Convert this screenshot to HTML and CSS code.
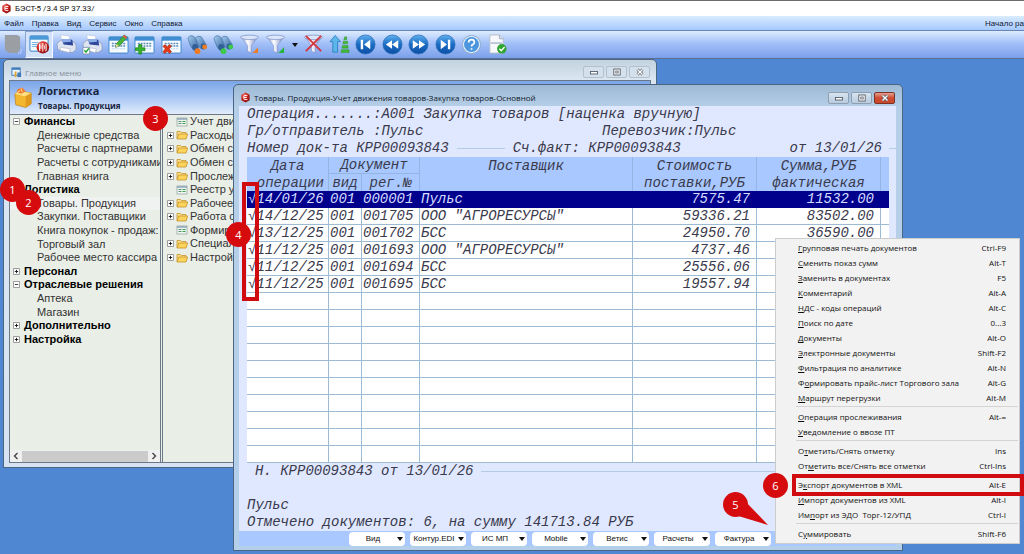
FILE: index.html
```html
<!DOCTYPE html>
<html lang="ru">
<head>
<meta charset="utf-8">
<title>БЭСТ-5</title>
<link rel="stylesheet" href="styles.css">
</head>
<body>
<svg class="defs" aria-hidden="true">
  <defs>
    <linearGradient id="gball" x1="0" y1="0" x2="0" y2="1"><stop offset="0" stop-color="#5fb0ee"/><stop offset=".5" stop-color="#1a6cc4"/><stop offset="1" stop-color="#0d4fa4"/></linearGradient>
    <linearGradient id="gfun" x1="0" y1="0" x2="1" y2="0"><stop offset="0" stop-color="#8f9fd0"/><stop offset=".4" stop-color="#fff"/><stop offset="1" stop-color="#6f80bd"/></linearGradient>
    <linearGradient id="gbin" x1="0" y1="0" x2="1" y2="1"><stop offset="0" stop-color="#a9cdf0"/><stop offset="1" stop-color="#2b5f9c"/></linearGradient>
    <radialGradient id="gred" cx=".35" cy=".3" r=".8"><stop offset="0" stop-color="#f07a70"/><stop offset=".5" stop-color="#c8201c"/><stop offset="1" stop-color="#7d0d0d"/></radialGradient>
  </defs>
  <symbol id="i-logo" viewBox="0 0 12 12"><path d="M6 .5 10.500 3v6L6 11.500 1.500 9V3Z" fill="url(#gred)"/><path d="M8 3.800H5.200a1 1 0 0 0-1 1v2.400a1 1 0 0 0 1 1H8M4.500 6h3" fill="none" stroke="#fff" stroke-width="1"/></symbol>
  <symbol id="i-db" viewBox="0 0 22 22"><path d="M3 1h13l3 2v13l-2 2v2H8l-5-3Z" fill="#9b9fa3"/><path d="M20 16v4h-4" fill="none" stroke="#e8eefc" stroke-dasharray="1 1"/></symbol>
  <symbol id="i-home" viewBox="0 0 22 22"><rect x="1" y="2" width="19" height="16" rx="1" fill="#f5faff" stroke="#2f7fc6"/><rect x="1" y="2" width="19" height="4" fill="#4a9ad8"/><path d="M3 9h7M3 11h6M3 13h6" stroke="#6fb0dd"/><circle cx="14.500" cy="14" r="6.500" fill="url(#gred)"/><path d="M12 10.500h-1v7h1M17 10.500h1v7h-1M14.500 9.500v9M12.500 12v4M16.500 12v4" stroke="#fff" stroke-width="1" fill="none"/></symbol>
  <symbol id="i-print" viewBox="0 0 22 22"><path d="M5 1 14 2l1 7-9-1Z" fill="#fff" stroke="#b9c2d6" stroke-width=".6"/><path d="M1 10 5 6.500l14 2 2 3v5l-4 3-15-3Z" fill="#dfe5f0" stroke="#8592b3" stroke-width=".7"/><path d="M6 5.500 17 6l1 6-10-1Z" fill="#2d479b"/><path d="m6 5.500 9-.5 1 3-9 1Z" fill="#8eb0e8"/><path d="m5 14 10 1.500-1 4L4 17Z" fill="#fff" stroke="#a5adc0" stroke-width=".6"/></symbol>
  <symbol id="i-grid" viewBox="0 0 22 22"><rect x="1" y="3" width="20" height="17" rx="1" fill="#f7fbff" stroke="#3a86c8"/><rect x="1" y="3" width="20" height="4" fill="#3f8ed2"/><path d="M4 10h14M4 12.500h14" stroke="#5f8cb5" stroke-width="1.600" stroke-dasharray="2 1"/><path d="M4 15.500h14" stroke="#b6d3ea" stroke-dasharray="2 1"/></symbol>
  <symbol id="i-edit" viewBox="0 0 22 22"><use href="#i-grid"/><path d="m8 14 1-4L17 1l3 2.500-8 9Z" fill="#49b53a" stroke="#2b7a26" stroke-width=".7"/><path d="m17 1 3 2.500-1.500 1.600L15.500 2.700Z" fill="#e85148"/><path d="m8 14 .8-3.500 2.800 2.200Z" fill="#f4d9a0"/></symbol>
  <symbol id="i-add" viewBox="0 0 22 22"><use href="#i-grid"/><path d="M5 11h3v3.500h3.500v3H8V21H5v-3.500H1.500v-3H5Z" fill="#36b52c" stroke="#1b7d19" stroke-width=".7"/></symbol>
  <symbol id="i-del" viewBox="0 0 22 22"><use href="#i-grid"/><path d="m2 13 2-2 2.500 2.500L9 11l2 2-2.500 2.500L11 18.500 9 20.500 6.500 18 4 20.500 2 18.500l2.500-3Z" fill="#e3391c" stroke="#a4210d" stroke-width=".6"/></symbol>
  <symbol id="i-bino" viewBox="0 0 22 22"><path d="M1 5q1-4 5-3 2 .5 3 3l3 6q1 5-3 6-3 0-5-4Z" fill="url(#gbin)" stroke="#4573a8" stroke-width=".7"/><path d="M9 4q2-3 6-1l5 8q1 4-3 5-3 0-5-4Z" fill="url(#gbin)" stroke="#4573a8" stroke-width=".7"/><ellipse cx="8.500" cy="14" rx="3" ry="3.500" fill="#315f96"/><ellipse cx="17" cy="13" rx="2.600" ry="3" fill="#315f96"/></symbol>
  <symbol id="i-fun" viewBox="0 0 22 22"><path d="M2 3 9 12v6l4 2v-8l7-9Z" fill="url(#gfun)" stroke="#7b8bc0" stroke-width=".6"/><ellipse cx="11" cy="3.500" rx="9.500" ry="2.300" fill="#dce6fa" stroke="#7b8bc0" stroke-width=".7"/></symbol>
  <symbol id="i-sort" viewBox="0 0 22 22"><path d="M6.500 1.500 12 8H9v11H4V8H1Z" fill="#5cb6ea" stroke="#1e78b8" stroke-width=".8"/><path d="M16.500 3h2v3h-3ZM15 7.500h4.500v2.800h-5ZM14 12h6v2.800h-6.500ZM13 16.500h8v3h-8.500Z" fill="#41bb33" stroke="#24861d" stroke-width=".4"/></symbol>
  <symbol id="i-ball" viewBox="0 0 22 22"><circle cx="11" cy="11" r="10" fill="url(#gball)" stroke="#2d6fb8" stroke-width=".8"/></symbol>
  <symbol id="i-first" viewBox="0 0 22 22"><use href="#i-ball"/><path d="M6 6h2.500v10H6ZM16 6v10l-6.500-5Z" fill="#fff"/></symbol>
  <symbol id="i-prev" viewBox="0 0 22 22"><use href="#i-ball"/><path d="M10.500 6.500v9L4 11ZM17 6.500v9L10.500 11Z" fill="#fff"/></symbol>
  <symbol id="i-next" viewBox="0 0 22 22"><use href="#i-ball"/><path d="M11.500 6.500v9L18 11ZM5 6.500v9l6.500-4.500Z" fill="#fff"/></symbol>
  <symbol id="i-last" viewBox="0 0 22 22"><use href="#i-ball"/><path d="M13.500 6H16v10h-2.500ZM6 6v10l6.500-5Z" fill="#fff"/></symbol>
  <symbol id="i-help" viewBox="0 0 22 22"><circle cx="11" cy="11" r="9.500" fill="#e3effb" stroke="#8aa9cc"/><circle cx="11" cy="11" r="7.800" fill="#4c96dd"/><path d="M8 9q0-3 3-3t3 2.600q0 1.600-1.700 2.500-1.300.7-1.300 2M11 14.800v1.800" fill="none" stroke="#fff" stroke-width="1.800"/></symbol>
  <symbol id="i-doc" viewBox="0 0 22 22"><path d="M3 1h10l4 4v15H3Z" fill="#f6f8fb" stroke="#b4bccb"/><path d="M13 1v4h4" fill="#d4dae6" stroke="#a8b1c2"/><path d="M4 9.500h12" stroke="#a9b6cc" stroke-width="1.500"/><circle cx="15.500" cy="15.500" r="5" fill="#2fa532"/><path d="m13 15.500 2 2 3.500-4" fill="none" stroke="#fff" stroke-width="1.500"/></symbol>
  <symbol id="i-folder" viewBox="0 0 12 10"><path d="M1 8.500V1.500h3.500l1 1H10V4" fill="#fbe08a" stroke="#c8922a" stroke-width=".8"/><path d="M1 9 2.700 4h9L10 9Z" fill="#fcd45c" stroke="#c8922a" stroke-width=".8"/></symbol>
  <symbol id="i-form" viewBox="0 0 12 10"><rect x="1" y="1" width="10" height="8" fill="#f2f6f2" stroke="#9aa7a0" stroke-width=".8"/><path d="M1 2h10" stroke="#84a0b8" stroke-width="1.400"/><path d="M2.500 4.500h3M2.500 6.500h3" stroke="#5b8f74"/><path d="M6.500 4.500h3M6.500 6.500h3" stroke="#3c9c50" stroke-width="1.200"/></symbol>
  <symbol id="i-plus" viewBox="0 0 7 7"><path d="M.5.5h6v6h-6Z" fill="#fff" stroke="#888" stroke-width=".8"/><path d="M1.800 3.500h3.400M3.500 1.800v3.400" stroke="#111" stroke-width=".9"/></symbol>
  <symbol id="i-minus" viewBox="0 0 7 7"><path d="M.5.5h6v6h-6Z" fill="#fff" stroke="#888" stroke-width=".8"/><path d="M1.800 3.500h3.400" stroke="#333" stroke-width=".9"/></symbol>
  <symbol id="i-min" viewBox="0 0 10 8"><rect x="1.500" y="3.500" width="7" height="2.500" fill="#fff" stroke="#555d68" stroke-width=".9"/></symbol>
  <symbol id="i-max" viewBox="0 0 10 8"><rect x="1.800" y="1" width="6.400" height="6" fill="#fff" stroke="#555d68" stroke-width=".9"/><rect x="3.800" y="3" width="2.400" height="2" fill="#fff" stroke="#555d68" stroke-width=".8"/></symbol>
  <symbol id="i-close" viewBox="0 0 10 8"><path d="m2.500 1.500 5 5m0-5-5 5" stroke="#555d68" stroke-width="2.800"/><path d="m2.500 1.500 5 5m0-5-5 5" stroke="#fff" stroke-width="1.400"/></symbol>
</svg>

<header>
  <div class="app-title"><svg class="logo"><use href="#i-logo"/></svg><span>БЭСТ-5 /3.4 SP 37.33/</span></div>
  <nav class="menubar">
    <button>Файл</button><button>Правка</button><button>Вид</button><button>Сервис</button><button>Окно</button><button>Справка</button>
    <span class="status">Начало ра</span>
  </nav>
  <div class="toolbar">
    <button class="tool lead" aria-label="База"><svg><use href="#i-db"/></svg></button>
    <div class="tools tools-edit">
      <button class="tool on" aria-label="Главное меню"><svg><use href="#i-home"/></svg></button>
      <button class="tool" aria-label="Печать"><svg><use href="#i-print"/></svg></button>
      <button class="tool" aria-label="Печать отмеченных"><svg viewBox="0 0 22 22"><use href="#i-print"/><path d="M1 14h7v7H1Z" fill="#fff" stroke="#6e87a8" stroke-width=".8"/><path d="m2.500 17 1.700 2 3-4" fill="none" stroke="#1da32a" stroke-width="1.500"/></svg></button>
      <button class="tool" aria-label="Изменить"><svg><use href="#i-edit"/></svg></button>
      <button class="tool" aria-label="Добавить"><svg><use href="#i-add"/></svg></button>
      <button class="tool" aria-label="Удалить"><svg><use href="#i-del"/></svg></button>
      <button class="tool" aria-label="Найти"><svg viewBox="0 0 22 22"><use href="#i-bino"/><circle cx="11" cy="18" r="3" fill="#ef7b24"/><circle cx="18.500" cy="13.500" r="2.600" fill="#ef7b24"/></svg></button>
      <button class="tool" aria-label="Найти далее"><svg viewBox="0 0 22 22"><use href="#i-bino"/><circle cx="11" cy="18" r="3" fill="#3dc94a"/><circle cx="18.500" cy="13.500" r="2.600" fill="#3dc94a"/></svg></button>
      <button class="tool" aria-label="Фильтр"><svg viewBox="0 0 22 22"><use href="#i-fun"/><path d="M20 14v6h-6Z" fill="#ee7d28"/></svg></button>
      <button class="tool" aria-label="Фильтр по значению"><svg viewBox="0 0 22 22"><use href="#i-fun"/><path d="M20 14v6h-6Z" fill="#27b43c"/></svg></button>
    </div>
    <button class="tool drop" aria-label="Список фильтров"><i class="caret"></i></button>
    <div class="tools tools-nav">
      <button class="tool" aria-label="Снять фильтр"><svg viewBox="0 0 22 22"><use href="#i-fun"/><path d="m3 2 16 16M19 2 3 18" stroke="#d3373f" stroke-width="2"/></svg></button>
      <button class="tool" aria-label="Сортировка"><svg><use href="#i-sort"/></svg></button>
      <button class="tool" aria-label="Первая"><svg><use href="#i-first"/></svg></button>
      <button class="tool" aria-label="Назад"><svg><use href="#i-prev"/></svg></button>
      <button class="tool" aria-label="Вперед"><svg><use href="#i-next"/></svg></button>
      <button class="tool" aria-label="Последняя"><svg><use href="#i-last"/></svg></button>
      <button class="tool" aria-label="Помощь"><svg><use href="#i-help"/></svg></button>
      <button class="tool" aria-label="Документ"><svg><use href="#i-doc"/></svg></button>
    </div>
  </div>
</header>

<main class="desktop">
  <section class="window main-menu">
    <div class="caption">
      <svg class="cap-icon" viewBox="0 0 12 12"><rect x="1" y="1" width="9" height="8" fill="#eaf4ff" stroke="#3a78b8"/><path d="M1 2h9" stroke="#3a78b8" stroke-width="2"/><path d="M4 5h2v6H4Z" fill="#e2a62f"/><path d="M7 6h4v5H7Z" fill="#4178b6"/></svg>
      <span>Главное меню</span>
      <div class="winbtns"><button aria-label="Свернуть"><svg><use href="#i-min"/></svg></button><button aria-label="Развернуть"><svg><use href="#i-max"/></svg></button><button aria-label="Закрыть"><svg><use href="#i-close"/></svg></button></div>
    </div>
    <div class="pane">
      <div class="section-head">
        <svg viewBox="0 0 22 24"><path d="M2 8 8 5l12 2v12l-6 4L3 20Z" fill="#f3b62f" stroke="#b97a12" stroke-width=".7"/><path d="m2 8 11 3 7-4v12l-6 4V11" fill="#e09a1b"/><path d="M2 8 8 5l12 2-7 4Z" fill="#ffdf80"/><path d="m5 3 5-2 4 4-5 3-5-2Z" fill="#ef7a33"/><path d="m4 7 4-3M9 2l1 4" stroke="#ffe08a"/></svg>
        <div><h1>Логистика</h1><h2>Товары. Продукция</h2></div>
      </div>
      <div class="trees">
        <div class="tree-box">
          <ul class="tree nav-tree">
            <li class="group"><svg><use href="#i-minus"/></svg>Финансы</li>
            <li>Денежные средства</li><li>Расчеты с партнерами</li><li>Расчеты с сотрудниками</li><li>Главная книга</li>
            <li class="group"><svg><use href="#i-minus"/></svg>Логистика</li>
            <li class="current">Товары. Продукция</li><li>Закупки. Поставщики</li><li>Книга покупок - продаж:</li><li>Торговый зал</li><li>Рабочее место кассира</li>
            <li class="group"><svg><use href="#i-plus"/></svg>Персонал</li>
            <li class="group"><svg><use href="#i-minus"/></svg>Отраслевые решения</li>
            <li>Аптека</li><li>Магазин</li>
            <li class="group"><svg><use href="#i-plus"/></svg>Дополнительно</li>
            <li class="group"><svg><use href="#i-plus"/></svg>Настройка</li>
          </ul>
          <div class="scroll"><svg viewBox="0 0 6 8"><path d="M4.500 1 1.500 4l3 3" fill="none" stroke="#444" stroke-width="1.400"/></svg><i></i><svg viewBox="0 0 6 8"><path d="m1.500 1 3 3-3 3" fill="none" stroke="#444" stroke-width="1.400"/></svg></div>
        </div>
        <ul class="tree task-tree">
          <li><i></i><svg><use href="#i-form"/></svg>Учет движ</li>
          <li><svg class="box"><use href="#i-plus"/></svg><svg><use href="#i-folder"/></svg>Расходы</li>
          <li><svg class="box"><use href="#i-plus"/></svg><svg><use href="#i-folder"/></svg>Обмен с ч</li>
          <li><svg class="box"><use href="#i-plus"/></svg><svg><use href="#i-folder"/></svg>Обмен с</li>
          <li><svg class="box"><use href="#i-plus"/></svg><svg><use href="#i-folder"/></svg>Прослежи</li>
          <li><i></i><svg><use href="#i-form"/></svg>Реестр уп</li>
          <li><svg class="box"><use href="#i-plus"/></svg><svg><use href="#i-folder"/></svg>Рабочее</li>
          <li><svg class="box"><use href="#i-plus"/></svg><svg><use href="#i-folder"/></svg>Работа с</li>
          <li><i></i><svg><use href="#i-form"/></svg>Формиро</li>
          <li><svg class="box"><use href="#i-plus"/></svg><svg><use href="#i-folder"/></svg>Специаль</li>
          <li><svg class="box"><use href="#i-plus"/></svg><svg><use href="#i-folder"/></svg>Настройк</li>
        </ul>
      </div>
    </div>
  </section>

  <section class="window journal">
    <div class="caption">
      <svg class="cap-icon"><use href="#i-logo"/></svg>
      <span>Товары. Продукция-Учет движения товаров-Закупка товаров-Основной</span>
      <div class="winbtns"><button aria-label="Свернуть"><svg><use href="#i-min"/></svg></button><button aria-label="Развернуть"><svg><use href="#i-max"/></svg></button><button class="close" aria-label="Закрыть"><svg><use href="#i-close"/></svg></button></div>
    </div>
    <div class="sheet">
      <div class="line"><span>Операция.......:А001 Закупка товаров [наценка вручную]</span></div>
      <div class="line"><span class="sender">Гр/отправитель :Пульс</span><span>Перевозчик:Пульс</span></div>
      <div class="line"><span>Номер док-та КРР00093843</span><i class="dash"></i><span>Сч.факт: КРР00093843</span><span class="date">от 13/01/26</span><i class="dash tail"></i></div>
      <table>
        <colgroup><col class="c-date"><col class="c-kind"><col class="c-reg"><col><col class="c-sum"><col class="c-sum"><col class="c-end"></colgroup>
        <thead>
          <tr><th>Дата</th><th colspan="2" class="under">Документ</th><th>Поставщик</th><th>Стоимость</th><th>Сумма,РУБ</th><th></th></tr>
          <tr><th class="op">операции</th><th>вид</th><th>рег.№</th><th></th><th>поставки,РУБ</th><th>фактическая</th><th></th></tr>
        </thead>
        <tbody>
          <tr class="sel"><td>√14/01/26</td><td>001</td><td>000001</td><td>Пульс</td><td class="n">7575.47</td><td class="n">11532.00</td><td></td></tr>
          <tr><td>√14/12/25</td><td>001</td><td>001705</td><td>ООО "АГРОРЕСУРСЫ"</td><td class="n">59336.21</td><td class="n">83502.00</td><td></td></tr>
          <tr><td>√13/12/25</td><td>001</td><td>001702</td><td>БСС</td><td class="n">24950.70</td><td class="n">36590.00</td><td></td></tr>
          <tr><td>√11/12/25</td><td>001</td><td>001693</td><td>ООО "АГРОРЕСУРСЫ"</td><td class="n">4737.46</td><td></td><td></td></tr>
          <tr><td>√11/12/25</td><td>001</td><td>001694</td><td>БСС</td><td class="n">25556.06</td><td></td><td></td></tr>
          <tr><td>√11/12/25</td><td>001</td><td>001695</td><td>БСС</td><td class="n">19557.94</td><td></td><td></td></tr>
          <tr><td></td><td></td><td></td><td></td><td></td><td></td><td></td></tr>
          <tr><td></td><td></td><td></td><td></td><td></td><td></td><td></td></tr>
          <tr><td></td><td></td><td></td><td></td><td></td><td></td><td></td></tr>
          <tr><td></td><td></td><td></td><td></td><td></td><td></td><td></td></tr>
          <tr><td></td><td></td><td></td><td></td><td></td><td></td><td></td></tr>
          <tr><td></td><td></td><td></td><td></td><td></td><td></td><td></td></tr>
          <tr><td></td><td></td><td></td><td></td><td></td><td></td><td></td></tr>
          <tr><td></td><td></td><td></td><td></td><td></td><td></td><td></td></tr>
          <tr><td></td><td></td><td></td><td></td><td></td><td></td><td></td></tr>
          <tr><td></td><td></td><td></td><td></td><td></td><td></td><td></td></tr>
        </tbody>
      </table>
      <div class="line note"><span>Н. КРР00093843 от 13/01/26</span><i class="dash rest"></i></div>
      <div class="line"></div>
      <div class="line"><span>Пульс</span></div>
      <div class="line"><span>Отмечено документов: 6, на сумму 141713.84 РУБ</span></div>
      <div class="actions">
        <button><span>Вид</span><i class="caret"></i></button><button><span>Контур.EDI</span><i class="caret"></i></button><button><span>ИС МП</span><i class="caret"></i></button><button><span>Mobile</span><i class="caret"></i></button><button><span>Ветис</span><i class="caret"></i></button><button><span>Расчеты</span><i class="caret"></i></button><button><span>Фактура</span><i class="caret"></i></button>
      </div>
    </div>
  </section>

  <div class="popup" role="menu">
    <button role="menuitem"><span><u>Г</u>рупповая печать документов</span><kbd>Ctrl-F9</kbd></button>
    <button role="menuitem"><span><u>С</u>менить показ сумм</span><kbd>Alt-T</kbd></button>
    <button role="menuitem"><span><u>З</u>аменить в документах</span><kbd>F5</kbd></button>
    <button role="menuitem"><span><u>К</u>омментарий</span><kbd>Alt-A</kbd></button>
    <button role="menuitem"><span><u>Н</u>ДС - коды операций</span><kbd>Alt-C</kbd></button>
    <button role="menuitem"><span><u>П</u>оиск по дате</span><kbd>0...3</kbd></button>
    <button role="menuitem"><span><u>Д</u>окументы</span><kbd>Alt-O</kbd></button>
    <button role="menuitem"><span><u>Э</u>лектронные документы</span><kbd>Shift-F2</kbd></button>
    <button role="menuitem"><span><u>Ф</u>ильтрация по аналитике</span><kbd>Alt-N</kbd></button>
    <button role="menuitem"><span>Ф<u>о</u>рмировать прайс-лист Торгового зала</span><kbd>Alt-G</kbd></button>
    <button role="menuitem"><span><u>М</u>аршрут перегрузки</span><kbd>Alt-M</kbd></button>
    <hr>
    <button role="menuitem"><span><u>О</u>перация прослеживания</span><kbd>Alt-=</kbd></button>
    <button role="menuitem"><span><u>У</u>ведомление о ввозе ПТ</span></button>
    <hr>
    <button role="menuitem"><span>О<u>т</u>метить/Снять отметку</span><kbd>Ins</kbd></button>
    <button role="menuitem"><span>От<u>м</u>етить все/Снять все отметки</span><kbd>Ctrl-Ins</kbd></button>
    <hr>
    <button role="menuitem"><span>Э<u>к</u>спорт документов в XML</span><kbd>Alt-E</kbd></button>
    <button role="menuitem"><span><u>И</u>мпорт документов из XML</span><kbd>Alt-I</kbd></button>
    <button role="menuitem"><span>Им<u>п</u>орт из ЭДО&nbsp; Торг-12/УПД</span><kbd>Ctrl-I</kbd></button>
    <hr>
    <button role="menuitem"><span>С<u>у</u>ммировать</span><kbd>Shift-F6</kbd></button>
  </div>
</main>

<div class="frame frame-marks"></div>
<div class="frame frame-export"></div>
<svg class="pointer" viewBox="0 0 40 30"><path d="M14 0 37 24 4 14Z" fill="#d60b0e"/></svg>
<b class="pin p1">1</b><b class="pin p2">2</b><b class="pin p3">3</b><b class="pin p4">4</b><b class="pin p5">5</b><b class="pin p6">6</b>
</body>
</html>
```
FILE: styles.css
```css
* { box-sizing: border-box; }
body {
  margin: 0;
  height: 100vh;
  overflow: hidden;
  display: flex;
  flex-direction: column;
  position: relative;
  background: #5087d3;
  font-family: "Open Sans", "Noto Sans", sans-serif;
  font-size: 8px;
  color: #111;
}
button { font: inherit; color: inherit; border: 0; padding: 0; margin: 0; background: none; }
ul, h1, h2 { margin: 0; padding: 0; list-style: none; }
svg { display: block; flex: none; }
.defs { position: absolute; width: 0; height: 0; }

/* application chrome */
.app-title {
  height: 16px;
  display: flex;
  align-items: center;
  gap: 3px;
  padding-left: 1px;
  background: #fff;
  border-top: 1px solid #6a6a6a;
  font: 8px Roboto, sans-serif;
}
.logo { width: 11px; height: 11px; }
.menubar {
  height: 15px;
  display: flex;
  align-items: center;
  gap: 8px;
  padding-left: 4px;
  background: linear-gradient(#d9ecff, #a6c9ff);
  border-bottom: 1px solid #6686ba;
  font-family: "Liberation Sans", sans-serif;
  color: #101830;
}
.status { margin-left: auto; }
.toolbar {
  height: 28px;
  display: flex;
  background: linear-gradient(#deecff, #a3c0f8 45%, #7ba0ea);
  border-bottom: 1px solid #5c6f90;
}
.tool { display: flex; align-items: center; justify-content: center; }
.tool svg { width: 21px; height: 21px; }
.tool.lead { width: 25px; }
.tool.on { border: 1px solid #f4f8ff; border-color: #8da5cf #f4f8ff #f4f8ff #8da5cf; background: #d3e2fb; }
.tool.drop { width: 11px; }
.tools { display: flex; }
.tools .tool { flex: 1; }
.tools-edit { width: 264px; }
.tools-nav { width: 211px; }
.caret { border: 3px solid transparent; border-top: 4px solid #111; border-bottom: 0; }

/* windows */
.desktop { flex: 1; }
.window {
  position: absolute;
  display: flex;
  flex-direction: column;
  border: 1px solid #4b6583;
  border-radius: 5px 5px 0 0;
}
.caption { display: flex; align-items: center; gap: 3px; }
.cap-icon { width: 11px; height: 11px; }
.winbtns { margin-left: auto; display: flex; gap: 2px; }
.winbtns button {
  width: 21px;
  height: 12px;
  display: flex;
  align-items: center;
  justify-content: center;
  border: 1px solid #8e9fb2;
  border-radius: 2px;
  background: linear-gradient(#d8e4f0, #b8cbdf);
}
.winbtns svg { width: 10px; height: 8px; }
.winbtns .close { background: linear-gradient(#e6a090, #cf4a30 50%, #c8492c); border-color: #7e3226; }

.main-menu { left: 3px; top: 59px; width: 654px; height: 409px; padding: 0 5px 4px; background: linear-gradient(#c3d2df, #dbe6f1 20px, #d7e3f2); }
.main-menu .caption { height: 20px; padding: 4px 1px 0 2px; color: #858d95; }
.main-menu .winbtns button { border-color: #b3c0cd; background: #d4e0ec; }
.pane { flex: 1; display: flex; flex-direction: column; border: 1px solid #6d7886; background: #e9eee7; }
.section-head {
  height: 34px;
  display: flex;
  align-items: center;
  gap: 5px;
  padding-left: 3px;
  background: linear-gradient(#7aa5e8, #a8c6f4 50%, #e2ecfb);
  border-bottom: 1px solid #6d7886;
}
.section-head svg { width: 20px; height: 23px; }
.section-head h1 { font-size: 11px; line-height: 16px; color: #16233c; }
.section-head h2 { font-size: 8px; line-height: 14px; color: #16233c; }
.trees { flex: 1; display: flex; }
.tree-box { width: 151px; display: flex; flex-direction: column; justify-content: space-between; border-right: 1px solid #6d7886; }
.tree { display: flex; flex-direction: column; font: 11px/13px "Liberation Sans", sans-serif; color: #333; white-space: nowrap; }
.tree li { flex: 1; display: flex; align-items: center; }
.nav-tree { height: 231px; overflow: hidden; }
.nav-tree li { padding-left: 27px; }
.nav-tree .group { padding-left: 3px; gap: 4px; font-weight: bold; color: #000; }
.nav-tree .group svg { width: 7px; height: 7px; }
.nav-tree .current { background: #f0f1f1; }
.task-tree { margin-left: 1px; padding-left: 4px; border-left: 1px solid #6d7886; }
.task-tree li { flex: none; height: calc(231px / 17); gap: 2px; }
.task-tree li i, .task-tree .box { width: 7px; height: 7px; }
.task-tree svg { width: 12px; height: 10px; }
.scroll { height: 12px; display: flex; align-items: center; gap: 3px; padding: 0 3px; background: #f0f0f0; }
.scroll i { flex: 1; height: 11px; background: #cbcbcb; }
.scroll svg { width: 6px; height: 8px; }

.journal { left: 233px; top: 84px; width: 670px; height: 467px; padding: 0 6px 4px 5px; background: linear-gradient(#9db9d4, #b6cfe8 22px, #b4cfea); }
.journal .caption { height: 21px; padding: 4px 1px 0; color: #10182a; }
.sheet { flex: 1; display: flex; flex-direction: column; background: #e0e8ff; font: italic 14px/17px "Liberation Mono", monospace; color: #3a3a4c; white-space: pre; }
.line { height: 17px; display: flex; align-items: center; padding-left: 8px; }
.line .sender { width: 355px; }
.dash { height: 1px; width: 48px; margin: 0 8px; background: #b4cbe6; }
.dash.tail { width: 7px; margin: 0 0 0 7px; }
.dash.rest { flex: 1; width: auto; margin-right: 0; }
.line .date { margin-left: auto; }
.note { padding-left: 16px; }
table { margin: 0 7px 0 8px; table-layout: fixed; border-collapse: separate; border-spacing: 0; }
.c-date { width: 82px; }
.c-kind { width: 33px; }
.c-reg { width: 58px; }
.c-sum { width: 124px; }
.c-end { width: 8px; }
th, td { height: 17px; padding: 0; overflow: hidden; font-weight: normal; line-height: 16px; border-right: 1px solid #9dbbd4; }
tr > :last-child { border-right: 0; }
th { background: #a8c8ff; border-color: #93b5e3; }
th.under { border-bottom: 1px solid #93b5e3; }
th.op { text-align: right; padding-right: 4px; }
td { background: #fff; border-bottom: 1px solid #9dbbd4; text-align: left; padding-left: 1px; }
td.n { text-align: right; padding-right: 6px; }
.sel td { background: #00008c; border-color: #00008c; color: #d6dcff; }
.actions { flex: 1; display: flex; gap: 5px; align-items: center; padding-left: 110px; background: #a8c8ff; }
.actions button {
  width: 56px;
  height: 14px;
  display: flex;
  align-items: center;
  padding-right: 2px;
  background: #fff;
  border-radius: 4px;
  font: 8px "Liberation Sans", sans-serif;
  color: #111;
}
.actions span { flex: 1; text-align: center; }

/* context menu */
.popup {
  position: absolute;
  left: 775px;
  top: 238px;
  width: 245px;
  padding: 1px 0 2px;
  display: flex;
  flex-direction: column;
  background: #f2f2f2;
  border: 1px solid #ccc;
  color: #111;
}
.popup button { height: 15px; display: flex; align-items: center; justify-content: space-between; padding: 0 13px 0 22px; white-space: nowrap; }
.popup kbd { font: inherit; }
.popup hr { width: 222px; height: 1px; margin: 1px 1px 2px auto; border: 0; background: #d4d4d4; }

/* callouts */
.frame { position: absolute; border: 4px solid #d00c10; }
.frame-marks { left: 242px; top: 182px; width: 17px; height: 119px; }
.frame-export { left: 792px; top: 474px; right: 0; height: 22px; }
.pointer { position: absolute; left: 731px; top: 501px; width: 40px; height: 30px; }
.pin {
  position: absolute;
  width: 25px;
  height: 25px;
  border-radius: 50%;
  background: #d60b0e;
  color: #fff;
  font: 11px/25px "Open Sans", sans-serif;
  text-align: center;
}
.p1 { left: 0; top: 177px; }
.p2 { left: 16px; top: 190px; }
.p3 { left: 143px; top: 106px; }
.p4 { left: 226px; top: 222px; }
.p5 { left: 723px; top: 492px; }
.p6 { left: 763px; top: 473px; }
```
